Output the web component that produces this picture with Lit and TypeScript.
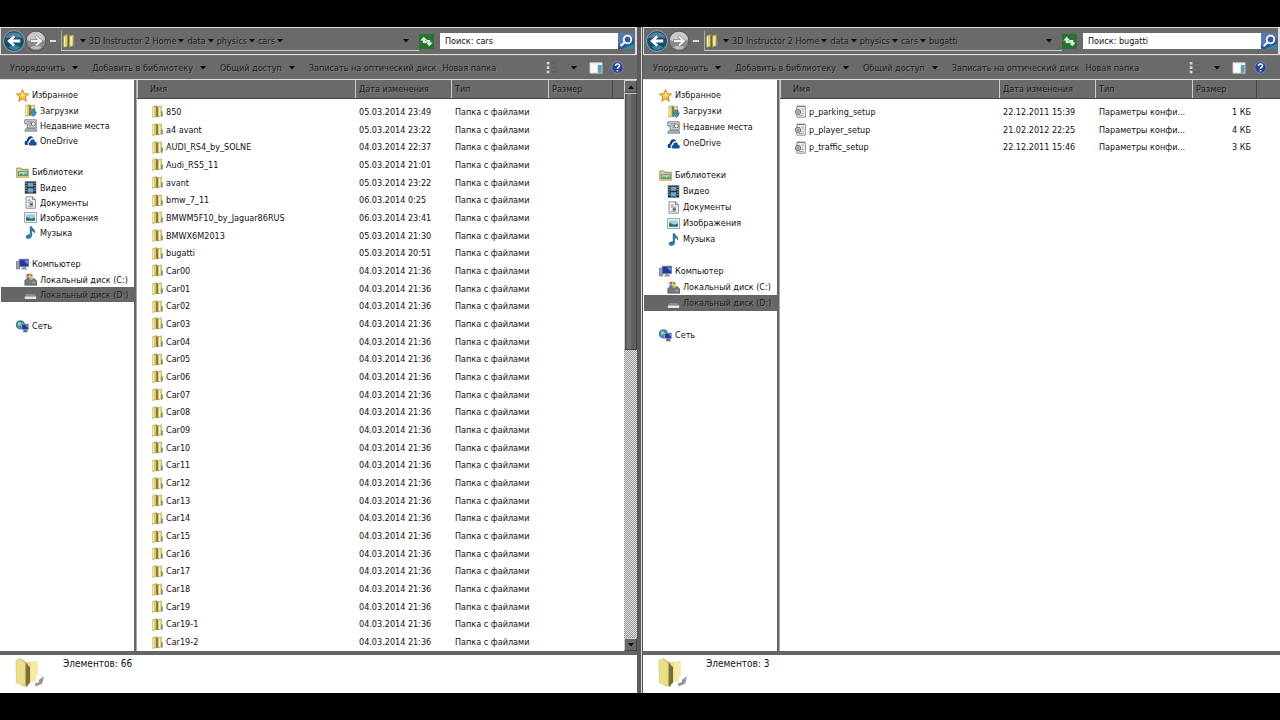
import { LitElement, html, css, svg, nothing } from "lit";
import { customElement, property } from "lit/decorators.js";

type IconName = string;

const folderShape = svg`
  <path d="M2 2 6.500 .5V14L2 15.500z" fill="#dccd70" stroke="#a39350" stroke-width=".6"/>
  <path d="M2.800 3v11" stroke="#f6efb4" stroke-width="1.400"/>
  <path d="M6.500 1 9 2.500V14l-2.500 1z" fill="#6f622c"/>
  <path d="M8.500 2 13 1v12l-4.500 2z" fill="#e3d47a" stroke="#a39350" stroke-width=".6"/>
  <path d="M10.500 3v10" stroke="#f8f2bd" stroke-width="1.400"/>
  <path d="M12.500 8h2v5.500l-2 1.500z" fill="#85857a"/>`;

const icons: Record<IconName, unknown> = {
  folder: folderShape,
  bigfolder: svg`
    <path d="M10.500 13.500 15.500 10l-1 4-3.500 1.500z" fill="#6d737a" opacity=".75"/>
    <path d="M5 2.500 12 2v10.500L7 13z" fill="#e9dc84"/>
    <path d="M8.500 2.200 12 2v10.500l-3.500.5z" fill="#f3eaa6"/>
    <path d="M3 .5 6.800 3.500V15.500L4 15z" fill="#8f8048"/>
    <path d="M6 3.500 8 5v8.500l-2 2z" fill="#7a6d3c"/>
    <path d="M.500 1.500 3 .5 5.500 3v12.500L.700 13.500z" fill="#ecdf8a" stroke="#cdbd68" stroke-width=".3"/>
    <path d="M11.500 9.500 12.800 10v3l-2.300 1z" fill="#fbfbf2"/>`,
  star: svg`<path d="M8 .8l2.200 4.900 5.300.5-4 3.600 1.200 5.300L8 12.300l-4.700 2.800 1.200-5.300-4-3.600 5.300-.5z" fill="#f8c54a" stroke="#b97716" stroke-width="1"/><path d="M8 3.500l1.300 3.200 3 .4-5.300 1.400z" fill="#fff0b0"/>`,
  downloads: svg`${folderShape}<path d="M9.500 6h4v4h2l-4 5.500L7.500 10h2z" fill="#3c8fc0" stroke="#216184" stroke-width=".6"/>`,
  recent: svg`<path d="M1 1h14v10H4V6H1z" fill="#e4e8ea" stroke="#555f66"/><path d="M3 3.500h7M5 6h5M6 8.500h3" stroke="#59646b"/><circle cx="11.500" cy="6" r="2.500" fill="#fff" stroke="#444"/><path d="M2 12h13l1 3H1z" fill="#b4bcc0" stroke="#555f66" stroke-width=".8"/>`,
  onedrive: svg`<path d="M1 12.500c-1-3 1-4.500 2.500-4.500C4 3 9 1 11.500 5 8 4.500 6 7.500 6 9c-2 .5-2 3-1 4.500H2z" fill="#123f87"/><path d="M7 14c-2-1-1.500-4 .500-4 .5-4.500 5.500-4.500 6-.5 2.500 0 3 3.500 1 4.500z" fill="#174f9e"/>`,
  libraries: svg`<path d="M1 2.500h5l1 1.500h8v10H1z" fill="#e9da83" stroke="#7c7a48"/><path d="M3 6.500h11V12H3z" fill="#a5d3d8" stroke="#4d7e7c"/><path d="M3 12l3-3 3 2 3-2 2 3z" fill="#5a934d"/><path d="M1 14.500l2-2h12v2z" fill="#e1ce71"/>`,
  video: svg`<path d="M1 .5h14v15H1z" fill="#1e3444"/><path d="M4.500 2h7v5h-7zM4.500 9h7v5h-7z" fill="#6fa6c4"/><path d="M2.500 2v12M13.500 2v12" stroke="#dfe8ee" stroke-width="1.200" stroke-dasharray="1.500 1.500"/>`,
  document: svg`<path d="M2.500 1h8L14 4.500V15H2.500z" fill="#fcfcfc" stroke="#6b747b"/><path d="M10.500 1v3.500H14M4.500 5h4M4.500 7.500h7M4.500 12.500h7" fill="none" stroke="#5d676d"/><path d="M7 9h4v2.500H7z" fill="#47535a"/>`,
  pictures: svg`<path d="M.500 2h15v12H.500z" fill="#fff" stroke="#78858b"/><path d="M2.500 4h11v8h-11z" fill="#9dd0df"/><path d="M2.500 7l3 1 3 1.500 5-1.500v4h-11z" fill="#2a6f78"/>`,
  music: svg`<path d="M7.500 .5h1.800c.5 2.500 5.200 4 3.900 8-.8-1.700-2.200-2.300-3.700-2.600V12c0 4-7 4.500-7 1.200 0-2 2.800-3 5-2.200z" fill="#2b7fa8" stroke="#174f73" stroke-width=".6"/>`,
  computer: svg`<path d="M.500 4h4v9.500h-4z" fill="#9aa3ac" stroke="#5b636d" stroke-width=".8"/><path d="M4 1.500h11.500v9H4z" fill="#2637a0" stroke="#727c94"/><path d="M10 3h4.500v5z" fill="#7c96e6"/><path d="M6 14h8l-2-3H8z" fill="#8d97a1"/>`,
  diskc: svg`<path d="M1 9l3-2h9l3 3v5H1z" fill="#717b7e" stroke="#3e4749" stroke-width=".7"/><path d="M10 12h4" stroke="#a5e071"/><path d="M3 1.500l3.500-1V4L3 5z" fill="#d2562c"/><path d="M7 .5l3.500 1V5L7 4z" fill="#78a23c"/><path d="M3 5.500l3.500-1V8L3 9z" fill="#4c79b8"/><path d="M7 4.500l3.500 1V9L7 8z" fill="#e3b53c"/>`,
  diskd: svg`<path d="M3 7.500h10l2 3H1z" fill="#8b8b8b"/><path d="M1 10.500h14v3H1z" fill="#e9e9e9"/>`,
  network: svg`<circle cx="5.500" cy="6" r="5" fill="#3b9aa8" stroke="#28598a"/><path d="M3 3c3-1 4 1 3 2.500S3 7 2 6z" fill="#a6d991"/><path d="M7 5h8.500v7H7z" fill="#2536a4" stroke="#a7b2c4"/><path d="M11.500 6.500h3v3z" fill="#8ba1ed"/><path d="M8.500 15h6l-1-3h-4z" fill="#5f6d7d"/>`,
  config: svg`<path d="M3.500 2H14v13H3.500z" fill="#f6f6f6" stroke="#777"/><path d="M4 1.500h10" stroke="#666" stroke-width="2" stroke-dasharray="1.500 1"/><path d="M9 5h3M10 7.500h2M9 10.500h3M6 13h6" stroke="#888"/><circle cx="5" cy="8.500" r="3.300" fill="#ccc" stroke="#666" stroke-width="1.200"/><circle cx="5" cy="8.500" r="1" fill="#fff" stroke="#666"/>`,
  back: svg`<circle cx="8" cy="8" r="7.600" fill="#174f70" stroke="#b9c4ca" stroke-width=".5"/><path d="M1.500 6a6.800 6 0 0 1 13 0c-4-1-9-1-13 0z" fill="#55809a"/><path d="M4 12.500c3-2 6-2 8.500 0-2 2.500-6 2.500-8.500 0z" fill="#2c88a8"/><path d="M7.500 4 3 8l4.500 4 1.300-1.300L7 9.100h5.500V6.900H7l1.800-1.600z" fill="#fff"/>`,
  forward: svg`<circle cx="8" cy="8" r="7.200" fill="#8a8a8a" stroke="#5a5a5a" stroke-width=".8"/><path d="M1.500 7a6.500 5.800 0 0 1 13 0c-3 2-10 2-13 0z" fill="#c9c9c9"/><path d="M4 12.500c2.500-1.500 5.500-1.500 8 0-2 2-6 2-8 0z" fill="#bdbdbd"/><path d="M8.500 4 13 8l-4.500 4-1.300-1.300L9 9.100H4V6.900h5L7.200 5.300z" fill="#efefef" stroke="#777" stroke-width=".5"/>`,
  refresh: svg`<path d="M0 0h16v16H0z" fill="#287334"/><path d="M5 3 1.500 7H4v2.500h4V7.500H6.200V7H9zM11 13l3.500-4H12V6.500H8v2h1.800V9H7.500z" fill="#e2f5df"/>`,
  search: svg`<path d="M0 0h16v16H0z" fill="#2b5a93"/><path d="M0 0h16v5L0 12z" fill="#5878ae"/><path d="M4 16l12-5v5z" fill="#2a8ea6"/><circle cx="9.500" cy="6.500" r="3.800" fill="#31599b" stroke="#fff" stroke-width="1.800"/><path d="M6.500 9.500 2.500 13" stroke="#fff" stroke-width="2.200"/>`,
  views: svg`<path d="M2 1h3v3H2zM2 6h3v3H2zM2 11h3v3H2z" fill="#d5d5d5"/><path d="M7 2.500h7M7 7.500h7M7 12.500h7" stroke="#595959"/>`,
  preview: svg`<path d="M1 2h14v12H1z" fill="#fbfbfb" stroke="#bbb" stroke-width=".8"/><path d="M10 4.500h4.500v9H10z" fill="#5aa0b4"/><path d="M1 2h14v2H1z" fill="#e6eef0"/>`,
  help: svg`<circle cx="8" cy="8" r="7" fill="#27458f" stroke="#8a94b4"/><path d="M5.500 6c0-3.500 5.500-3 5 0-.3 1.500-2.300 1.500-2.500 3.500M8 11v2" fill="none" stroke="#fff" stroke-width="1.800"/>`,
};

const icon = (name: IconName, cls = "ico") =>
  html`<svg class=${cls} viewBox="0 0 16 16" aria-hidden="true">${icons[name]}</svg>`;

const caret = html`<svg class="caret" viewBox="0 0 6 4" aria-hidden="true"><path d="M0 0h6L3 3.500z" fill="#0a0a0a"/></svg>`;

interface FileRow { name: string; date: string; type: string; size?: string; }

const dated: [string, string][] = [
  ["850", "05.03.2014 23:49"], ["a4 avant", "05.03.2014 23:22"], ["AUDI_RS4_by_SOLNE", "04.03.2014 22:37"],
  ["Audi_RS5_11", "05.03.2014 21:01"], ["avant", "05.03.2014 23:22"], ["bmw_7_11", "06.03.2014 0:25"],
  ["BMWM5F10_by_Jaguar86RUS", "06.03.2014 23:41"], ["BMWX6M2013", "05.03.2014 21:30"], ["bugatti", "05.03.2014 20:51"],
];
const numbered = [
  ...Array.from({ length: 20 }, (_, i) => "Car" + String(i).padStart(2, "0")), "Car19-1", "Car19-2",
].map((n): [string, string] => [n, "04.03.2014 21:36"]);

const carFiles: FileRow[] = [...dated, ...numbered].map(([name, date]) => ({ name, date, type: "Папка с файлами" }));
const bugattiFiles: FileRow[] = [
  { name: "p_parking_setup", date: "22.12.2011 15:39", type: "Параметры конфи...", size: "1 КБ" },
  { name: "p_player_setup", date: "21.02.2012 22:25", type: "Параметры конфи...", size: "4 КБ" },
  { name: "p_traffic_setup", date: "22.12.2011 15:46", type: "Параметры конфи...", size: "3 КБ" },
];

const places: { icon: IconName; label: string; items: [IconName, string][] }[] = [
  { icon: "star", label: "Избранное", items: [["downloads", "Загрузки"], ["recent", "Недавние места"], ["onedrive", "OneDrive"]] },
  { icon: "libraries", label: "Библиотеки", items: [["video", "Видео"], ["document", "Документы"], ["pictures", "Изображения"], ["music", "Музыка"]] },
  { icon: "computer", label: "Компьютер", items: [["diskc", "Локальный диск (C:)"], ["diskd", "Локальный диск (D:)"]] },
  { icon: "network", label: "Сеть", items: [] },
];

@customElement("explorer-window")
class ExplorerWindow extends LitElement {
  @property({ attribute: false }) path: string[] = [];
  @property({ attribute: false }) files: FileRow[] = [];
  @property() count = "";
  @property() kind: IconName = "folder";
  @property({ type: Boolean, reflect: true }) scrollable = false;
  @property({ type: Boolean, reflect: true }) roomy = false;

  static styles = css`
    :host { display: flex; flex-direction: column; min-width: 0; min-height: 0; background: #fff; --row: 15px; --head: 16px; --bar: #6a6a6a; --bar-text: #1c1c1c; }
    :host([roomy]) { --row: 16px; }
    * { box-sizing: border-box; }
    button, input { font: inherit; color: inherit; border: 0; margin: 0; padding: 0; background: none; }
    button { display: flex; align-items: center; white-space: nowrap; text-shadow: inherit; }
    a { color: inherit; text-decoration: none; }
    svg { display: block; flex: none; }
    .ico { width: 13px; height: 13px; }
    .caret { width: 6px; height: 4px; }
    .address, .tools, thead, .on { text-shadow: 1px 1px 0 #808080; }
    .address { display: flex; align-items: center; height: 28px; background: var(--bar); border: 1px solid #ddd; border-right-width: 2px; padding: 0 1px 0 2px; }
    .nav, .nav svg { width: 22px; height: 22px; }
    .minus { width: 6px; height: 2px; background: #ddd; margin: 0 5px 0 3px; }
    .crumbs { display: flex; align-items: center; flex: 1; min-width: 0; height: 20px; border-bottom: 1px solid #ccc; border-left: 1px solid #aaa; color: var(--bar-text); }
    .crumbs .ico { width: 14px; height: 16px; margin-right: 4px; }
    .crumbs a { margin: 0 2px 0 3px; white-space: nowrap; }
    .crumbs .drop { margin-left: auto; padding: 0 10px; }
    .refresh svg { width: 15px; height: 15px; }
    .search { display: flex; align-items: center; width: 194px; height: 16px; margin-left: 6px; background: #fff; }
    .search input { flex: 1; min-width: 0; height: 16px; padding: 0 5px; color: #111; outline: 0; }
    .search input::placeholder { color: #111; opacity: 1; text-shadow: none; }
    .search svg { width: 16px; height: 16px; }
    .tools { display: flex; align-items: center; height: 25px; background: var(--bar); border-top: 1px solid #777; border-bottom: 1px solid #ddd; padding: 0 13px 0 10px; color: var(--bar-text); }
    .tools button { gap: 7px; margin-right: 14px; }
    .tools .burn { margin-right: 6px; }
    .tools .views { margin: 0 12px 0 auto; gap: 12px; }
    .tools .preview { margin-right: 8px; }
    .tools .help { margin: 0; }
    .views .ico, .preview .ico { width: 14px; height: 14px; }
    .body { display: grid; grid-template-columns: 134px 3px minmax(0, 1fr); flex: 1; min-height: 0; }
    .side { padding-top: 7px; overflow: hidden; }
    .split { background: #666; border-right: 1px solid #aaa; }
    .group { display: flex; flex-direction: column; margin-bottom: 16px; }
    .group a { display: flex; align-items: center; gap: 3px; height: var(--row); padding-left: 24px; white-space: nowrap; }
    .group .head { height: var(--head); padding-left: 16px; }
    .group .on { background: #666; color: var(--bar-text); margin-left: 1px; padding-left: 23px; }
    .main { display: grid; grid-template-columns: minmax(0, 1fr) auto; min-height: 0; }
    .list { display: flex; flex-direction: column; min-width: 0; min-height: 0; }
    table { display: flex; flex-direction: column; flex: 1; min-height: 0; }
    tr { display: grid; grid-template-columns: minmax(0, 1fr) 96px 97px 64px 12px; align-items: center; }
    :host([roomy]) tr { grid-template-columns: minmax(0, 1fr) 96px 97px 64px 24px; }
    th, td { padding: 0; text-align: left; font-weight: 400; white-space: nowrap; }
    thead tr { height: 19px; background: var(--bar); color: var(--bar-text); border-bottom: 1px solid #444; }
    th { height: 18px; line-height: 19px; padding-left: 3px; border-left: 1px solid #ccc; }
    th:first-child { padding-left: 12px; }
    th:last-child { border-left-color: #444; }
    tbody { display: grid; grid-template-rows: repeat(31, minmax(0, 1fr)); flex: 1; min-height: 0; padding-top: 4px; }
    td { padding-left: 4px; }
    td:first-child { padding-left: 14px; }
    td:nth-child(4) { text-align: right; padding-right: 5px; }
    td a { display: flex; align-items: center; gap: 2px; }
    .scroll { display: flex; flex-direction: column; width: 13px; background: repeating-conic-gradient(#9a9a9a 0 25%, #ddd 0 50%) 0 0 / 2px 2px; }
    .scroll button { justify-content: center; height: 13px; background: var(--bar); border: 1px solid #ccc; border-right-color: #444; border-bottom-color: #444; }
    .up .caret { transform: rotate(180deg); }
    .thumb { flex: 0 0 45%; background: linear-gradient(90deg, #5a5a5a 0 2px, #727272 2px 6px, #606060 6px); border: 1px solid #ccc; border-right: 1px solid #444; border-bottom: 1px solid #444; }
    .rest { flex: 1; }
    .status { display: flex; gap: 18px; height: 42px; padding-left: 15px; border-top: 4px solid #666; font-size: 10px; }
    .status svg { width: 30px; height: 35px; }
    .status span { padding-top: 3px; }
  `;

  render() {
    const here = this.path[this.path.length - 1];
    return html`
      <header class="address">
        <button class="nav" aria-label="Назад">${icon("back")}</button>
        <button class="nav" aria-label="Вперёд">${icon("forward")}</button>
        <span class="minus"></span>
        <nav class="crumbs">
          ${icon("folder")}${caret}
          ${this.path.map((p, i) => html`<a href="#">${p}</a>${this.scrollable || i < this.path.length - 1 ? caret : nothing}`)}
          <button class="drop" aria-label="Предыдущие расположения">${caret}</button>
        </nav>
        <button class="refresh" aria-label="Обновить">${icon("refresh")}</button>
        <label class="search"><input type="text" aria-label="Поиск" placeholder=${"Поиск: " + here} />${icon("search")}</label>
      </header>
      <div class="tools">
        <button>Упорядочить ${caret}</button>
        <button>Добавить в библиотеку ${caret}</button>
        <button>Общий доступ ${caret}</button>
        <button class="burn">Записать на оптический диск</button>
        <button>Новая папка</button>
        <button class="views" aria-label="Вид">${icon("views")}${caret}</button>
        <button class="preview" aria-label="Область просмотра">${icon("preview")}</button>
        <button class="help" aria-label="Справка">${icon("help")}</button>
      </div>
      <div class="body">
        <nav class="side">
          ${places.map((g) => html`<div class="group">
            <a class="head" href="#">${icon(g.icon)}${g.label}</a>
            ${g.items.map(([i, label]) => html`<a href="#" class=${i === "diskd" ? "on" : ""}>${icon(i)}${label}</a>`)}
          </div>`)}
        </nav>
        <div class="split"></div>
        <div class="main">
          <div class="list">
            <table>
              <thead><tr><th>Имя</th><th>Дата изменения</th><th>Тип</th><th>Размер</th><th></th></tr></thead>
              <tbody>
                ${this.files.map((f) => html`<tr>
                  <td><a href="#">${icon(this.kind)}${f.name}</a></td><td>${f.date}</td><td>${f.type}</td><td>${f.size ?? ""}</td><td></td>
                </tr>`)}
              </tbody>
            </table>
          </div>
          ${this.scrollable ? html`<div class="scroll">
            <button class="up" aria-label="Вверх">${caret}</button>
            <div class="thumb"></div><div class="rest"></div>
            <button aria-label="Вниз">${caret}</button>
          </div>` : nothing}
        </div>
      </div>
      <footer class="status">${icon("bigfolder")}<span>${this.count}</span></footer>
    `;
  }
}

@customElement("app-root")
class AppRoot extends LitElement {
  static styles = css`
    :host { display: block; background: #000; color: #111; font: 9px/12px "DejaVu Sans Condensed", "DejaVu Sans", Tahoma, sans-serif; }
    .desk { display: grid; grid-template-columns: minmax(0, 1fr) 6px minmax(0, 1fr); box-sizing: border-box; height: 100vh; padding: 27px 0; }
    .gap { background: #5c5c5c; border-right: 1px solid #555; box-shadow: inset -1px 0 #ddd; }
  `;
  render() {
    return html`<main class="desk">
      <explorer-window scrollable .path=${["3D Instructor 2 Home", "data", "physics", "cars"]} .files=${carFiles} count="Элементов: 66"></explorer-window>
      <div class="gap"></div>
      <explorer-window roomy kind="config" .path=${["3D Instructor 2 Home", "data", "physics", "cars", "bugatti"]} .files=${bugattiFiles} count="Элементов: 3"></explorer-window>
    </main>`;
  }
}
